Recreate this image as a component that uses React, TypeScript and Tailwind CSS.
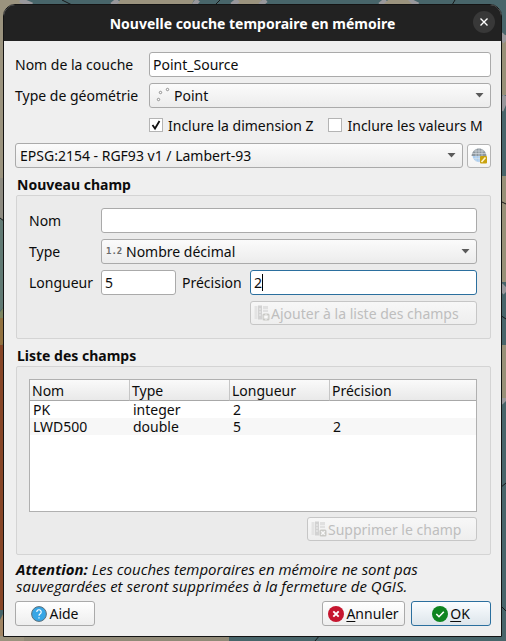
import { useState } from "react";
import type { ReactNode } from "react";

const FIELD_BASE = "h-[25px] w-full min-w-0 rounded-[3px] border bg-white px-[3px] outline-none";
const FIELD = FIELD_BASE + " border-[#aaaaaa] focus:border-[#2b6f9e]";
const ACTIVE_FIELD = FIELD_BASE + " border-[#2b6f9e]";
const BUTTON =
  "flex h-[25px] items-center justify-center rounded-[3px] border border-[#aaaaaa] bg-linear-to-b from-white to-[#eeeeee]";
const DISABLED_BUTTON =
  "flex h-6 items-center gap-px rounded-[3px] border border-[#c6c6c6] bg-linear-to-b from-[#f7f7f7] to-[#eeeeee] px-[3px] text-[#bebebe]";

function MapBackdrop() {
  return (
    <svg
      className="absolute inset-0 h-full w-full"
      viewBox="0 0 506 641"
      preserveAspectRatio="none"
      aria-hidden="true"
    >
      <rect width="506" height="641" fill="#48656a" />
      <path d="M0 0H22L30 8V180H0Z" fill="#9b937e" />
      <path d="M120 0H194L190 8H114Z" fill="#9b937e" />
      <path d="M238 0H262L256 8H236Z" fill="#9b937e" />
      <path d="M20 0l12 5M118 0l-6 5M198 0l-4 5M238 0l-6 5M266 0l-6 5M386 0l-6 5M408 0l10 5" stroke="#98979b" strokeWidth="5" />
      <path d="M62 0l10 5M455 0l-3 5M220 0l-4 4" stroke="#17191a" />
      <path d="M388 0h20l5 5h-30z" fill="#9b937e" />
      <path d="M0 178h4v44H0z" fill="#8d8a80" />
      <path d="M0 218l5 4v83l-5 6z" fill="#617a74" />
      <path d="M0 218l4 3" stroke="#17191a" />
      <path d="M0 312l5-7v13l-5 6z" fill="#7d8662" />
      <path d="M0 318h5v24l-5 5z" fill="#92713f" />
      <path d="M0 345h5v265H0z" fill="#874526" />
      <path d="M0 620l5-10v31H0z" fill="#a08463" />
      <path d="M0 636h24v5H0z" fill="#9b937e" />
      <path d="M24 636h205v5H24z" fill="#918a77" />
      <path d="M500 35h6v60h-6z" fill="#989078" />
      <path d="M500 35l6 6M500 110l6-14M500 286l6 6M500 402l6-6" stroke="#98979b" strokeWidth="7" />
      <path d="M500 176h6v106h-6zM500 345h6v53h-6z" fill="#989078" />
      <path d="M500 201l6 3M500 315l6 4M500 488l6-5M500 605l6 6M315 641l5-6" stroke="#17191a" />
    </svg>
  );
}

function Arrow() {
  return (
    <svg className="pointer-events-none absolute top-[10px] right-[7px] h-[5px] w-[9px]" viewBox="0 0 9 5" aria-hidden="true">
      <path d="M0.5 0h8L4.5 4.5z" fill="#5a5a5a" />
    </svg>
  );
}

function Combo({ id, value, label, icon }: { id: string; value: string; label?: string; icon?: ReactNode }) {
  return (
    <div className="relative min-w-0 flex-1">
      <select
        id={id}
        aria-label={label}
        defaultValue={value}
        className={
          "block h-[25px] w-full appearance-none rounded-[3px] border border-[#aaaaaa] bg-linear-to-b from-[#fbfbfb] to-[#ececec] outline-none " +
          (icon ? "pl-6" : "pl-1")
        }
      >
        <option>{value}</option>
      </select>
      {icon}
      <Arrow />
    </div>
  );
}

function PointIcon() {
  return (
    <svg className="pointer-events-none absolute top-1 left-[5px] h-4 w-4" viewBox="0 0 16 16" fill="#ffffff" stroke="#8b8b8b" aria-hidden="true">
      <circle cx="4.500" cy="12.500" r="1.200" />
      <circle cx="6.500" cy="5.500" r="1.200" />
      <circle cx="13.500" cy="2.500" r="1.200" />
    </svg>
  );
}

function GlobeIcon() {
  return (
    <svg className="h-4 w-4" viewBox="0 0 16 16" aria-hidden="true">
      <circle cx="8" cy="7.500" r="6.500" fill="#a9cdf0" />
      <path d="M0.500 8C1 3 4.500 0.500 8 0.500S15 3 15.500 8z" fill="#8e979e" />
      <path d="M1 5.500h14M3 3h10M5 1v13M8 0.500v14M11 1v8M2 10.500h8" stroke="#dde3e7" strokeWidth="0.600" fill="none" />
      <rect x="9" y="8" width="7" height="7.500" rx="1" fill="#c9a20e" />
      <path d="M10.500 14l4-4.500" stroke="#fff6cf" strokeWidth="1.600" />
    </svg>
  );
}

function FieldIcon({ remove }: { remove?: boolean }) {
  return (
    <svg className="h-4 w-4 shrink-0" viewBox="0 0 16 16" aria-hidden="true">
      <rect x="0.500" y="1" width="3" height="13" fill="#e3e3e3" />
      <rect x="4" y="0.500" width="4" height="14" fill="#d2d2d2" />
      <path d="M5 4h2M5 7h2M5 10h2" stroke="#eeeeee" />
      <path d="M9 1h5v6H9z" fill="#e0e0e0" />
      <path d="M9 4.500h5" stroke="#eeeeee" />
      <rect x="8.500" y="8.500" width="7" height="7" rx="1.500" fill="#c9c9c5" />
      {remove ? (
        <path d="M10.200 10.200l3.600 3.600M13.800 10.200l-3.600 3.600" stroke="#f8f8f8" strokeWidth="1.500" />
      ) : (
        <path d="M12 9.300v5.400M9.700 10.700l4.600 2.600M14.300 10.700l-4.600 2.600" stroke="#f8f8f8" strokeWidth="1.200" />
      )}
    </svg>
  );
}

function Group({ title, children }: { title: string; children: ReactNode }) {
  return (
    <section>
      <h2 className="ml-[2px] text-[14px] leading-5 font-bold">{title}</h2>
      <div className="ml-px rounded-[2px] border border-[#d4d4d4] bg-[#ebebeb] py-3 pr-[13px] pl-3">{children}</div>
    </section>
  );
}

const options = [
  { text: "Inclure la dimension Z", checked: true },
  { text: "Inclure les valeurs M", checked: false },
];

const rows = [
  ["PK", "integer", "2", ""],
  ["LWD500", "double", "5", "2"],
];

export default function App() {
  const [precision, setPrecision] = useState("2");
  return (
    <div className="relative min-h-screen bg-[#48656a] py-1 pr-1 pl-[3px] font-['Noto_Sans',sans-serif] text-[14px] leading-[17px] text-[#0c0c0c]">
      <MapBackdrop />
      <main className="relative rounded-t-[12px] border border-[#141414] bg-[#efefef]">
        <header className="relative flex h-9 items-center justify-center rounded-t-[11px] bg-[#222222] text-white">
          <h1 className="text-[14px] font-bold">Nouvelle couche temporaire en mémoire</h1>
          <button aria-label="Fermer" className="absolute top-[6px] right-[6px] flex h-[22px] w-[22px] items-center justify-center rounded-full bg-[#383838]">
            <svg className="h-2 w-2" viewBox="0 0 8 8" aria-hidden="true">
              <path d="M0.500 0.500l7 7M7.500 0.500l-7 7" stroke="#fff" strokeWidth="1.400" />
            </svg>
          </button>
        </header>

        <form className="pt-[11px] pr-[10px] pb-[10px] pl-[11px]" onSubmit={(e) => e.preventDefault()}>
          <div className="grid grid-cols-[128px_1fr] items-center gap-x-[6px] gap-y-[6px]">
            <label htmlFor="layer">Nom de la couche</label>
            <input id="layer" className={FIELD} defaultValue="Point_Source" />
            <label htmlFor="geometry" className="whitespace-nowrap">Type de géométrie</label>
            <Combo id="geometry" value="Point" icon={<PointIcon />} />
          </div>

          <div className="mt-2 flex h-[18px] gap-[15px] pl-[134px]">
            {options.map((option) => (
              <label key={option.text} className="flex items-center gap-[5px] whitespace-nowrap">
                <span className="relative h-[14px] w-[14px]">
                  <input type="checkbox" defaultChecked={option.checked} className="peer block h-[14px] w-[14px] appearance-none border border-[#b4b4b4] bg-white" />
                  <svg className="pointer-events-none absolute inset-0 hidden h-[14px] w-[14px] peer-checked:block" viewBox="0 0 14 14" aria-hidden="true">
                    <path d="M3.500 7l2.500 3.500L10.500 3" fill="none" stroke="#111" strokeWidth="1.800" />
                  </svg>
                </span>
                {option.text}
              </label>
            ))}
          </div>

          <div className="mt-[9px] flex items-center gap-1">
            <Combo id="crs" label="Système de coordonnées" value="EPSG:2154 - RGF93 v1 / Lambert-93" />
            <button aria-label="Choisir le système de coordonnées" className="flex h-6 w-6 items-center justify-center rounded-[3px] border border-[#b4b4b4] bg-linear-to-b from-white to-[#f3f3f3]">
              <GlobeIcon />
            </button>
          </div>

          <div className="mt-[7px]">
            <Group title="Nouveau champ">
              <div className="grid grid-cols-[66px_1fr] items-center gap-x-[6px] gap-y-[6px]">
                <label htmlFor="name">Nom</label>
                <input id="name" className={FIELD} />
                <label htmlFor="type">Type</label>
                <Combo
                  id="type"
                  value="Nombre décimal"
                  icon={<span className="pointer-events-none absolute top-1 left-[5px] font-['DejaVu_Sans_Mono',monospace] text-[9px] leading-4 font-bold text-[#6b6b6b]">1.2</span>}
                />
                <label htmlFor="length">Longueur</label>
                <div className="flex items-center gap-[6px]">
                  <div className="w-[75px]">
                    <input id="length" className={FIELD} defaultValue="5" />
                  </div>
                  <label htmlFor="precision" className="w-[62px]">Précision</label>
                  <div className="relative min-w-0 flex-1">
                    <input id="precision" className={ACTIVE_FIELD} value={precision} onChange={(e) => setPrecision(e.target.value)} />
                    <span className="pointer-events-none absolute top-1 left-3 h-[17px] w-px bg-black" />
                  </div>
                </div>
              </div>
              <div className="mt-[6px] mb-px flex justify-end">
                <button disabled className={DISABLED_BUTTON + " w-[227px]"}>
                  <FieldIcon />
                  Ajouter à la liste des champs
                </button>
              </div>
            </Group>
          </div>

          <div className="mt-[7px]">
            <Group title="Liste des champs">
              <div className="h-[133px] border border-[#b0b0b0] bg-white">
                <table className="w-full table-fixed border-separate border-spacing-0 text-left">
                  <colgroup>
                    <col className="w-[100px]" />
                    <col className="w-[100px]" />
                    <col className="w-[100px]" />
                    <col />
                  </colgroup>
                  <thead>
                    <tr>
                      {["Nom", "Type", "Longueur", "Précision"].map((h) => (
                        <th key={h} className="h-[21px] border-r border-b border-r-[#c6c6c6] border-b-[#a8a8a8] bg-linear-to-b from-[#fafafa] to-[#e9e9e9] p-0 pl-[2px] font-normal last:border-r-0">
                          {h}
                        </th>
                      ))}
                    </tr>
                  </thead>
                  <tbody>
                    {rows.map((row) => (
                      <tr key={row[0]} className="even:bg-[#f7f7f7]">
                        {row.map((cell, i) => (
                          <td key={i} className="h-[17px] p-0 pl-[3px]">{cell}</td>
                        ))}
                      </tr>
                    ))}
                  </tbody>
                </table>
              </div>
              <div className="mt-[5px] mb-px flex justify-end">
                <button disabled className={DISABLED_BUTTON + " w-[170px]"}>
                  <FieldIcon remove />
                  Supprimer le champ
                </button>
              </div>
            </Group>
          </div>

          <p className="mt-[6px] ml-px font-['Open_Sans',sans-serif] text-[15px] italic">
            <strong>Attention:</strong> Les couches temporaires en mémoire ne sont pas
            <br />
            sauvegardées et seront supprimées à la fermeture de QGIS.
          </p>

          <div className="mt-[6px] flex gap-[6px]">
            <button className={BUTTON + " mr-auto w-20 gap-[2px]"}>
              <svg className="h-4 w-4" viewBox="0 0 16 16" aria-hidden="true">
                <circle cx="8" cy="8" r="7.400" fill="#37a6e6" stroke="#5e6f78" />
                <path d="M5.800 6a2.200 2.200 0 1 1 3.400 1.800C8.300 8.400 8 8.800 8 9.700M8 11.300v1.200" fill="none" stroke="#fff" strokeWidth="1.200" />
              </svg>
              Aide
            </button>
            <button className={BUTTON + " w-[83px] gap-[2px]"}>
              <svg className="h-4 w-4 shrink-0" viewBox="0 0 16 16" aria-hidden="true">
                <circle cx="8" cy="8" r="8" fill="#c6162f" />
                <path d="M5.300 5.300l5.400 5.400M10.700 5.300l-5.400 5.400" stroke="#fff" strokeWidth="1.900" />
              </svg>
              <span><u className="underline-offset-2">A</u>nnuler</span>
            </button>
            <button className="flex h-[25px] w-20 items-center justify-center gap-[2px] rounded-[3px] border border-[#2b6f9e] bg-linear-to-b from-[#fafdff] to-[#dde5eb]">
              <svg className="h-4 w-4" viewBox="0 0 16 16" aria-hidden="true">
                <circle cx="8" cy="8" r="8" fill="#0e8420" />
                <path d="M4.300 8l2.700 2.700 4.800-5" fill="none" stroke="#fff" strokeWidth="1.600" />
              </svg>
              <span><u className="underline-offset-2">O</u>K</span>
            </button>
          </div>
        </form>
      </main>
    </div>
  );
}
